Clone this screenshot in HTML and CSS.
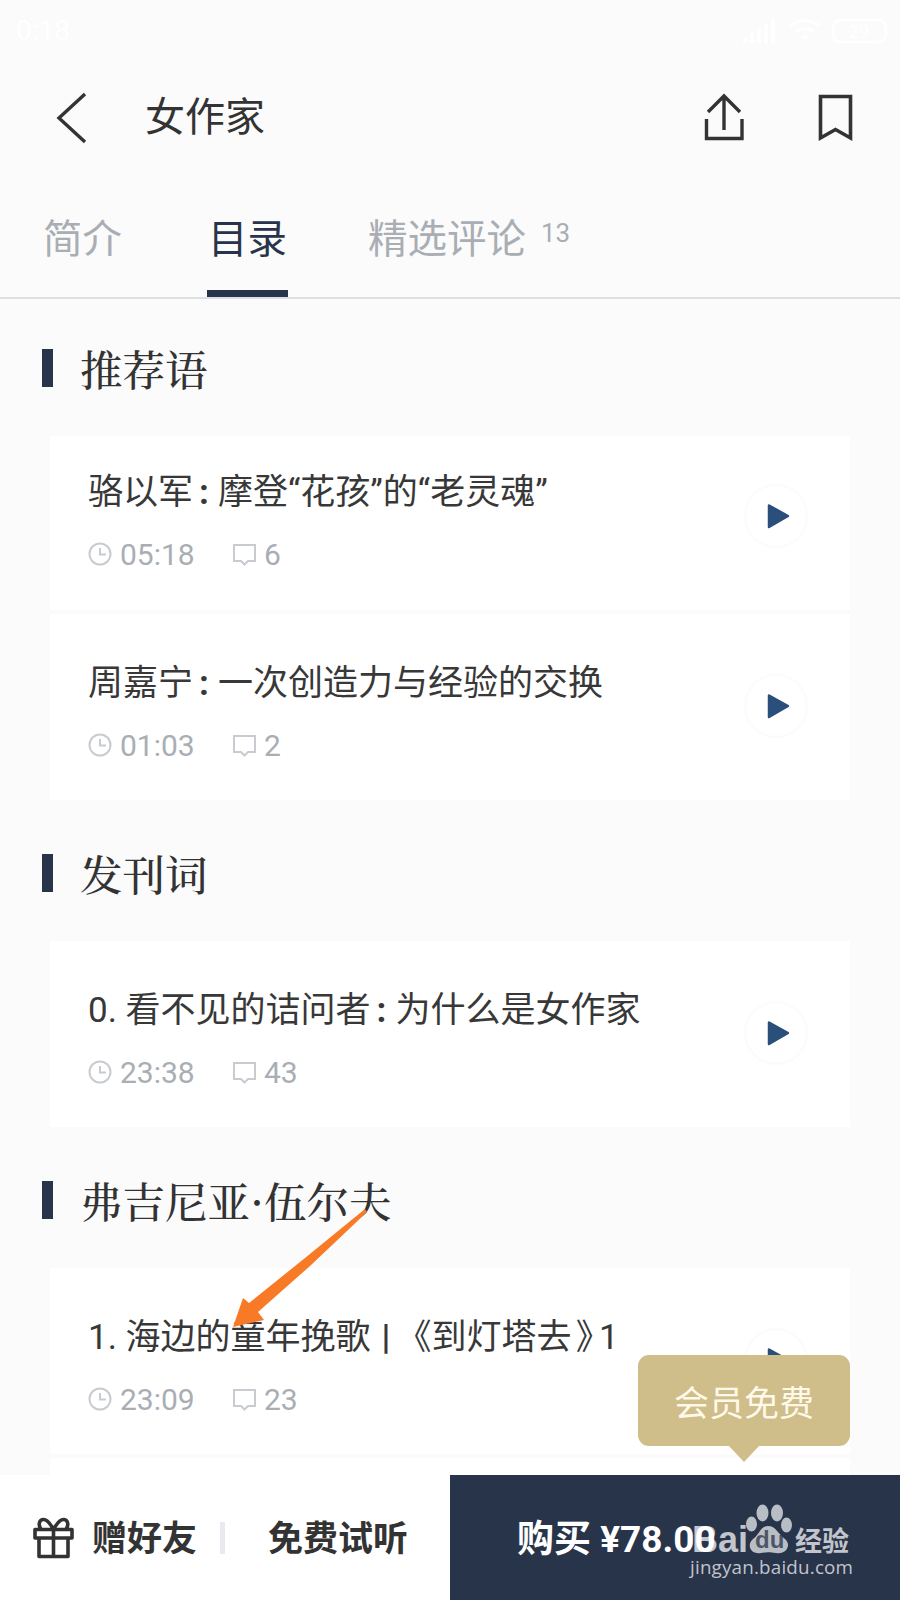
FILE: index.html
```html
<!DOCTYPE html>
<html lang="zh">
<head>
<meta charset="utf-8">
<title>女作家</title>
<link rel="stylesheet" href="styles.css">
</head>
<body>
<div class="screen">
  <div class="status">
    <span class="clock-text">0:18</span>
    <svg class="status-icons" width="150" height="26" viewBox="0 0 150 26">
      <g fill="#fff">
        <rect x="3" y="20" width="4" height="5"/><rect x="10" y="15" width="4" height="10"/><rect x="17" y="10" width="4" height="15"/><rect x="24" y="6" width="4" height="19"/><rect x="31" y="1" width="4" height="24"/>
      </g>
      <g fill="none" stroke="#fff" stroke-width="3">
        <path d="M50 8a24 24 0 0 1 30 0"/><path d="M56 14a14 14 0 0 1 18 0"/><path d="M62 20a5 5 0 0 1 6 0"/>
        <rect x="93" y="2" width="53" height="22" rx="8"/>
      </g>
      <text x="119" y="20" class="batt" text-anchor="middle">29</text>
    </svg>
  </div>

  <header class="head">
    <svg class="back" width="32" height="52" viewBox="0 0 32 52"><path d="M29 2 3 26l26 24" fill="none" stroke="#333" stroke-width="3.4"/></svg>
    <h1 class="head-title">女作家</h1>
    <svg class="share" width="42" height="50" viewBox="0 0 42 50"><path d="M3.500 26V45.500H39V26M21 4V37M5 19 21 3 37 19" fill="none" stroke="#333" stroke-width="3.400"/></svg>
    <svg class="mark" width="36" height="50" viewBox="0 0 36 50"><path d="M3.500 3.500H33.500V45L18.500 36.500 3.500 45z" fill="none" stroke="#333" stroke-width="3.600"/></svg>
  </header>

  <nav class="tabs">
    <span class="tab tab-a">简介</span>
    <span class="tab tab-b is-active">目录</span>
    <span class="tab tab-c">精选评论<sup class="tab-num">13</sup></span>
  </nav>

  <main class="list">
    <section class="sect">
      <h2 class="sect-title">推荐语</h2>
      <div class="card card-first">
        <div class="card-body">
          <div class="card-title">骆以军<b class="colon">:</b>摩登“花孩”的“老灵魂”</div>
          <div class="meta">
            <svg class="ico" width="24" height="24" viewBox="0 0 24 24"><circle cx="12" cy="12" r="10.500" fill="none" stroke="#c8ccd0" stroke-width="2"/><path d="M12 6v6.500h6" fill="none" stroke="#c8ccd0" stroke-width="2"/></svg>
            <span class="meta-time">05:18</span>
            <svg class="ico ico-c" width="24" height="24" viewBox="0 0 24 24"><path d="M2 3h21v16h-7l-3.500 3.500L9 19H2z" fill="none" stroke="#c8ccd0" stroke-width="2"/></svg>
            <span>6</span>
          </div>
        </div>
        <div class="play"><svg width="24" height="26" viewBox="0 0 24 26"><path d="M3 2.500 22 13 3 24z" fill="#2a4f7a" stroke="#2a4f7a" stroke-width="2.500" stroke-linejoin="round"/></svg></div>
      </div>
      <div class="card">
        <div class="card-body">
          <div class="card-title">周嘉宁<b class="colon">:</b>一次创造力与经验的交换</div>
          <div class="meta">
            <svg class="ico" width="24" height="24" viewBox="0 0 24 24"><circle cx="12" cy="12" r="10.500" fill="none" stroke="#c8ccd0" stroke-width="2"/><path d="M12 6v6.500h6" fill="none" stroke="#c8ccd0" stroke-width="2"/></svg>
            <span class="meta-time">01:03</span>
            <svg class="ico ico-c" width="24" height="24" viewBox="0 0 24 24"><path d="M2 3h21v16h-7l-3.500 3.500L9 19H2z" fill="none" stroke="#c8ccd0" stroke-width="2"/></svg>
            <span>2</span>
          </div>
        </div>
        <div class="play"><svg width="24" height="26" viewBox="0 0 24 26"><path d="M3 2.500 22 13 3 24z" fill="#2a4f7a" stroke="#2a4f7a" stroke-width="2.500" stroke-linejoin="round"/></svg></div>
      </div>
    </section>

    <section class="sect">
      <h2 class="sect-title">发刊词</h2>
      <div class="card">
        <div class="card-body">
          <div class="card-title">0. 看不见的诘问者<b class="colon">:</b>为什么是女作家</div>
          <div class="meta">
            <svg class="ico" width="24" height="24" viewBox="0 0 24 24"><circle cx="12" cy="12" r="10.500" fill="none" stroke="#c8ccd0" stroke-width="2"/><path d="M12 6v6.500h6" fill="none" stroke="#c8ccd0" stroke-width="2"/></svg>
            <span class="meta-time">23:38</span>
            <svg class="ico ico-c" width="24" height="24" viewBox="0 0 24 24"><path d="M2 3h21v16h-7l-3.500 3.500L9 19H2z" fill="none" stroke="#c8ccd0" stroke-width="2"/></svg>
            <span>43</span>
          </div>
        </div>
        <div class="play"><svg width="24" height="26" viewBox="0 0 24 26"><path d="M3 2.500 22 13 3 24z" fill="#2a4f7a" stroke="#2a4f7a" stroke-width="2.500" stroke-linejoin="round"/></svg></div>
      </div>
    </section>

    <section class="sect">
      <h2 class="sect-title">弗吉尼亚·伍尔夫</h2>
      <div class="card">
        <div class="card-body">
          <div class="card-title">1. 海边的童年挽歌<b class="pipe">|</b>《到灯塔去<span class="tail">》1</span></div>
          <div class="meta">
            <svg class="ico" width="24" height="24" viewBox="0 0 24 24"><circle cx="12" cy="12" r="10.500" fill="none" stroke="#c8ccd0" stroke-width="2"/><path d="M12 6v6.500h6" fill="none" stroke="#c8ccd0" stroke-width="2"/></svg>
            <span class="meta-time">23:09</span>
            <svg class="ico ico-c" width="24" height="24" viewBox="0 0 24 24"><path d="M2 3h21v16h-7l-3.500 3.500L9 19H2z" fill="none" stroke="#c8ccd0" stroke-width="2"/></svg>
            <span>23</span>
          </div>
        </div>
        <div class="play"><svg width="24" height="26" viewBox="0 0 24 26"><path d="M3 2.500 22 13 3 24z" fill="#2a4f7a" stroke="#2a4f7a" stroke-width="2.500" stroke-linejoin="round"/></svg></div>
      </div>
      <div class="card"></div>
    </section>
  </main>

  <footer class="bar">
    <div class="bar-left">
      <svg class="gift" width="41" height="42" viewBox="0 0 41 42"><path d="M2 12.500H39V21H2zM6 21V39.500H35V21M20.500 12.500V39.500M20.500 12.500C17 6 14 2 10 2.500 6 3 5 8 8 12.500M20.500 12.500C24 6 27 2 31 2.500 35 3 36 8 33 12.500" fill="none" stroke="#333" stroke-width="3.600" stroke-linejoin="round"/></svg>
      <span class="bar-gift">赠好友</span>
      <span class="bar-sep"></span>
      <span class="bar-try">免费试听</span>
    </div>
    <div class="bar-buy">购买 ¥78.00</div>
  </footer>

  <div class="tip">会员免费</div>

  <svg class="arrow" width="150" height="130" viewBox="0 0 150 130"><path d="M135 1 137 4 80 58 28 104 34 112 3 119 13 90 19 95 75 50z" fill="#f97a26"/></svg>

  <div class="mark-wm">
    <svg class="paw" width="50" height="52" viewBox="0 0 50 52"><g fill="#fff" fill-opacity=".68"><ellipse cx="17.500" cy="9" rx="6" ry="8.500"/><ellipse cx="32" cy="9" rx="6" ry="8.500"/><ellipse cx="6.500" cy="20" rx="5.500" ry="7.500"/><ellipse cx="41.500" cy="21" rx="5.500" ry="7.500"/><path d="M23 22c8 0 10 8 17 13 7 6 1 16-9 14-6-1-10-1-15 0-10 2-15-8-8-14 7-5 7-13 15-13z"/></g></svg>
    <span class="wm-bai">Bai</span><span class="wm-du">du</span><span class="wm-cn">经验</span>
    <span class="wm-url">jingyan.baidu.com</span>
  </div>
</div>
</body>
</html>
```

FILE: styles.css
```css
* { box-sizing: border-box; }
html, body { margin: 0; padding: 0; }
body {
  font-family: "Roboto", "Noto Sans CJK SC", sans-serif;
  background: #fbfbfb;
  color: #333;
}
.screen {
  position: relative;
  width: 900px;
  height: 1600px;
  overflow: hidden;
  background: #fbfbfb;
}

/* status bar */
.status {
  height: 60px;
  display: flex;
  justify-content: space-between;
  align-items: center;
  padding: 0 10px 0 16px;
}
.clock-text { font-size: 28px; color: #fff; }
.status-icons { display: block; margin-top: 2px; }
.batt { font: 19px "Roboto", sans-serif; fill: #fff; }

/* header */
.head {
  height: 116px;
  display: flex;
  align-items: center;
  padding-left: 56px;
  padding-right: 47px;
}
.back { margin-right: 57px; }
.head-title {
  flex: 1;
  margin: 0;
  font-size: 40px;
  font-weight: 400;
  line-height: 50px;
  color: #333;
}
.share { margin-right: 72px; }

/* tabs */
.tabs {
  height: 123px;
  display: flex;
  align-items: flex-start;
  padding: 38px 0 0 42px;
  border-bottom: 2px solid #dcdfe3;
}
.tab {
  position: relative;
  height: 83px;
  padding: 0 1px;
  font-size: 39.500px;
  line-height: 52px;
  color: #a9aeb4;
  white-space: nowrap;
}
.tab-b { margin-left: 84px; }
.tab-c { margin-left: 79px; }
.is-active { color: #28344a; }
.is-active::after {
  content: "";
  position: absolute;
  left: 0;
  right: 0;
  bottom: 0;
  height: 7px;
  background: #28344a;
}
.tab-num {
  font-size: 26px;
  line-height: 26px;
  vertical-align: 11px;
  margin-left: 15px;
}

/* sections */
.sect { padding-top: 50px; }
.sect-title {
  margin: 0 0 49px 42px;
  padding-left: 27px;
  height: 38px;
  border-left: 11px solid #28344a;
  font-family: "Noto Serif CJK SC", "Noto Sans CJK SC", serif;
  font-size: 42.500px;
  font-weight: 500;
  line-height: 38px;
  color: #333;
}
.card {
  display: flex;
  align-items: flex-start;
  justify-content: space-between;
  width: 800px;
  height: 186px;
  margin: 0 0 4px 50px;
  padding: 47px 44px 0 38px;
  background: #fff;
}
.card-first { height: 174px; padding-top: 34px; }
.card-body { display: flex; flex-direction: column; gap: 20px; }
.card-title {
  font-size: 35px;
  line-height: 46px;
  color: #383838;
  white-space: nowrap;
}
.colon { margin: 0 9px 0 6px; }
.pipe { margin: 0 6px 0 11px; font-weight: 700; }
.tail { margin-left: 5px; letter-spacing: 5px; font-feature-settings: "palt"; }
.meta {
  display: flex;
  align-items: center;
  font-size: 30px;
  line-height: 38px;
  color: #a9aeb4;
}
.ico { display: block; margin-right: 8px; margin-top: -3px; }
.meta-time { width: 112px; }
.ico-c { margin-right: 8px; }
.play {
  display: flex;
  align-items: center;
  justify-content: center;
  width: 60px;
  height: 60px;
  margin-top: 15px;
  padding-left: 3px;
  border-radius: 50%;
  background: #fff;
  box-shadow: 0 0 4px rgba(0, 0, 0, .05);
}
.card-first .play { margin-top: 16px; }

/* bottom bar */
.bar {
  position: absolute;
  left: 0;
  right: 0;
  bottom: 0;
  height: 125px;
  display: flex;
  background: #fff;
}
.bar-left {
  width: 450px;
  display: flex;
  align-items: center;
  padding-left: 33px;
  font-size: 35px;
  font-weight: 700;
  color: #333;
}
.bar-gift { margin: 0 0 4px 18px; }
.bar-try { margin-bottom: 4px; }
.bar-sep { width: 5px; height: 32px; margin: 0 43px 0 23px; background: #e8eaee; }
.bar-buy {
  width: 450px;
  display: flex;
  align-items: center;
  padding: 0 0 4px 67px;
  background: #28344a;
  color: #fff;
  font-size: 37px;
  font-weight: 700;
}

/* tooltip */
.tip {
  position: absolute;
  left: 638px;
  top: 1355px;
  width: 212px;
  height: 91px;
  display: flex;
  align-items: center;
  justify-content: center;
  border-radius: 11px;
  background: #cfbd8a;
  color: #fff9ea;
  font-size: 35px;
}
.tip::after {
  content: "";
  position: absolute;
  left: 91px;
  top: 91px;
  border-style: solid;
  border-width: 16px 15px 0;
  border-color: #cfbd8a transparent transparent;
}

/* annotation arrow */
.arrow {
  position: absolute;
  left: 230px;
  top: 1208px;
}

/* watermark */
.mark-wm {
  position: absolute;
  left: 690px;
  top: 1504px;
  width: 170px;
  height: 85px;
  color: rgba(255, 255, 255, .72);
}
.paw { position: absolute; left: 55px; top: 0; }
.wm-bai, .wm-du, .wm-cn, .wm-url { position: absolute; white-space: nowrap; }
.wm-bai { left: 2px; top: 16px; font: 700 36px/40px "Liberation Sans", sans-serif; }
.wm-du { left: 65px; top: 21px; font: 700 24px/30px "Liberation Sans", sans-serif; color: rgba(40, 52, 74, .75); }
.wm-cn { left: 105px; top: 18px; font: 700 27px/36px "Noto Sans CJK SC", sans-serif; }
.wm-url { left: 0; top: 48px; font: 400 18.800px/30px "Open Sans", sans-serif; letter-spacing: .2px; }
```
